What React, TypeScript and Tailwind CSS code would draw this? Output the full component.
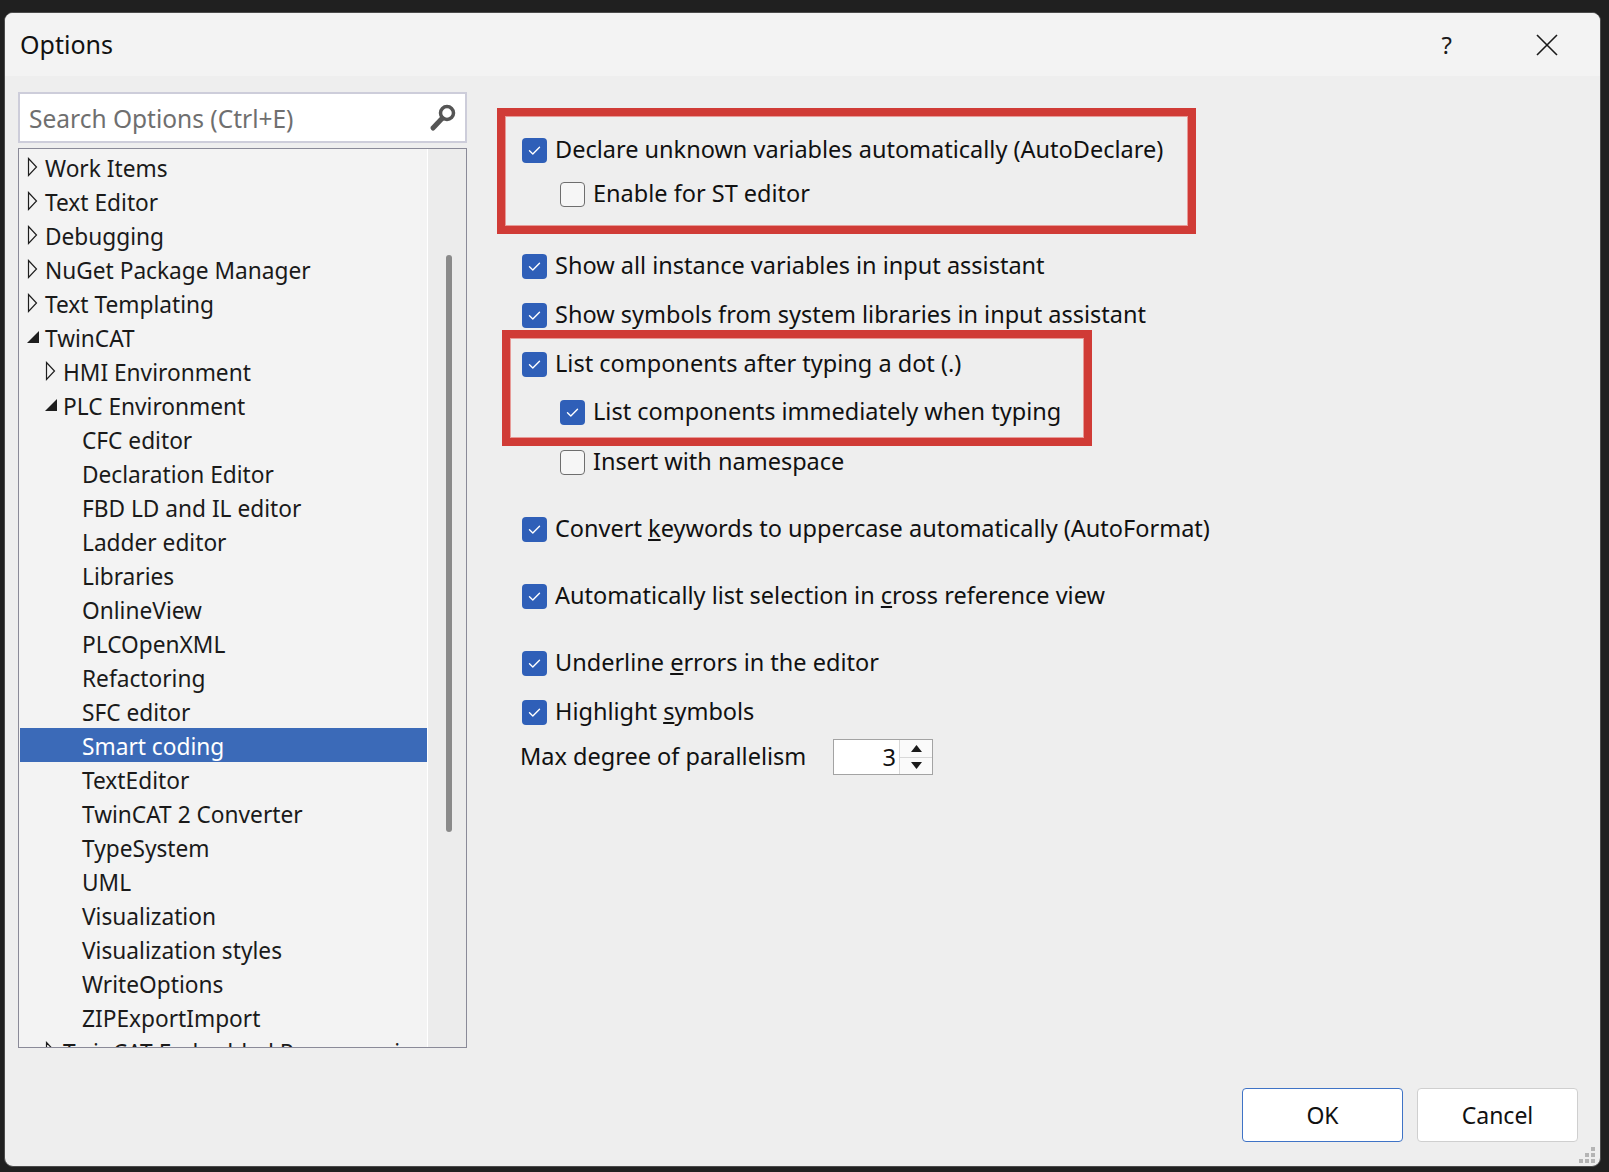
import { ReactNode } from "react";

type TreeNode = {
  label: string;
  level: number;
  state?: "open" | "closed";
  selected?: boolean;
};

const treeNodes: TreeNode[] = [
  { label: "Work Items", level: 0, state: "closed" },
  { label: "Text Editor", level: 0, state: "closed" },
  { label: "Debugging", level: 0, state: "closed" },
  { label: "NuGet Package Manager", level: 0, state: "closed" },
  { label: "Text Templating", level: 0, state: "closed" },
  { label: "TwinCAT", level: 0, state: "open" },
  { label: "HMI Environment", level: 1, state: "closed" },
  { label: "PLC Environment", level: 1, state: "open" },
  { label: "CFC editor", level: 2 },
  { label: "Declaration Editor", level: 2 },
  { label: "FBD LD and IL editor", level: 2 },
  { label: "Ladder editor", level: 2 },
  { label: "Libraries", level: 2 },
  { label: "OnlineView", level: 2 },
  { label: "PLCOpenXML", level: 2 },
  { label: "Refactoring", level: 2 },
  { label: "SFC editor", level: 2 },
  { label: "Smart coding", level: 2, selected: true },
  { label: "TextEditor", level: 2 },
  { label: "TwinCAT 2 Converter", level: 2 },
  { label: "TypeSystem", level: 2 },
  { label: "UML", level: 2 },
  { label: "Visualization", level: 2 },
  { label: "Visualization styles", level: 2 },
  { label: "WriteOptions", level: 2 },
  { label: "ZIPExportImport", level: 2 },
  { label: "TwinCAT Embedded Programming", level: 1, state: "closed" },
];

const levelPad = ["pl-[8px]", "pl-[26px]", "pl-[45px]"];

const Expander = ({ state }: { state?: "open" | "closed" }) => {
  if (state === "closed") {
    return (
      <svg width="17" height="20" viewBox="0 0 17 20" className="shrink-0">
        <path d="M1.5 1.5 L9.5 10 L1.5 18.5 Z" fill="none" stroke="#1e1e1e" strokeWidth="1.2" />
      </svg>
    );
  }
  if (state === "open") {
    return (
      <svg width="17" height="20" viewBox="0 0 17 20" className="shrink-0">
        <path d="M0 16 L12 16 L12 4 Z" fill="#1e1e1e" />
      </svg>
    );
  }
  return <span className="w-[17px] shrink-0" />;
};

const Check = ({ checked }: { checked: boolean }) =>
  checked ? (
    <span className="flex h-[25px] w-[25px] shrink-0 items-center justify-center rounded-[4px] bg-[#2f5fb8]">
      <svg width="25" height="25" viewBox="0 0 25 25">
        <path d="M7.5 12.8 L10.8 16 L17.5 9.2" fill="none" stroke="#ffffff" strokeWidth="1.4" strokeLinecap="round" strokeLinejoin="round" />
      </svg>
    </span>
  ) : (
    <span className="h-[25px] w-[25px] shrink-0 rounded-[4px] border-[1.5px] border-[#6e6e6e] bg-[#f6f6f6]" />
  );

const Option = ({ checked, indent, className, children }: { checked: boolean; indent?: boolean; className?: string; children: ReactNode }) => (
  <div className={`flex h-[30px] items-center gap-[8px] ${indent ? "pl-[38px]" : ""} ${className ?? ""}`}>
    <Check checked={checked} />
    <span className="whitespace-nowrap">{children}</span>
  </div>
);

export default function App() {
  return (
    <div
      className="h-[1172px] w-[1609px] bg-[#202020] pl-[4px] pt-[12px] text-[#111111]"
      style={{ fontFamily: '"Noto Sans", "Open Sans", sans-serif' }}
    >
      <div className="relative flex h-[1155px] w-[1597px] flex-col overflow-hidden rounded-[9px] border border-[#4b4b4b] bg-[#eeeeee]">
        {/* title bar */}
        <div className="flex h-[63px] items-center bg-[#f3f3f3] pl-[15px]">
          <span className="text-[25px] text-[#111111]">Options</span>
          <span className="ml-auto text-[24px] text-[#1a1a1a]">?</span>
          <button type="button" className="ml-[84px] mr-[42px] flex items-center">
            <svg width="22" height="22" viewBox="0 0 22 22">
              <path d="M1 1 L21 21 M21 1 L1 21" stroke="#1a1a1a" strokeWidth="1.6" />
            </svg>
          </button>
        </div>

        <div className="flex flex-1 flex-col">
          <div className="flex pl-[13px] pt-[16px]">
            {/* left column */}
            <div className="flex w-[449px] flex-col">
              <div className="flex h-[51px] items-center border-2 border-[#cdcdda] bg-white pl-[9px] pr-[8px]">
                <span className="mt-[3px] text-[24.5px] text-[#6f6f6f]">Search Options (Ctrl+E)</span>
                <svg width="28" height="30" viewBox="0 0 28 30" className="ml-auto">
                  <circle cx="18" cy="10" r="6.5" fill="none" stroke="#555555" strokeWidth="3.5" />
                  <path d="M13 15.5 L4 25" stroke="#555555" strokeWidth="5" strokeLinecap="round" />
                </svg>
              </div>
              <div className="mt-[5px] flex h-[900px] border border-[#8a8a98] bg-[#f3f3f3]">
                <div className="w-[408px] overflow-hidden pt-[1px]">
                  {treeNodes.map((node) => (
                    <div
                      key={node.label}
                      className={`flex h-[34px] items-center gap-0 whitespace-nowrap text-[22.7px] ${levelPad[node.level]} ${
                        node.selected ? "ml-[1px] bg-[#3b6ab8] text-white" : "text-[#1a1a1a]"
                      }`}
                    >
                      <Expander state={node.state} />
                      <span className={node.selected ? "pl-0 pt-[4px]" : "pl-[1px] pt-[4px]"}>{node.label}</span>
                    </div>
                  ))}
                </div>
                <div className="flex flex-1 justify-center border-l border-white bg-[#ececec] pt-[106px]">
                  <div className="ml-[4px] h-[577px] w-[6px] rounded-full bg-[#8a8a8a]" />
                </div>
              </div>
            </div>

            {/* right column */}
            <div className="ml-[30px] flex flex-col pt-[16px] text-[23.5px]">
              <div className="w-[699px] border-[8px] border-[#d03b36] pb-[10px] pl-[17px] pt-[12px] shadow-[inset_0_0_0_1px_#e79a97]">
                <div className="flex h-[44px] items-center gap-[8px]">
                  <Check checked />
                  <span className="whitespace-nowrap">Declare unknown variables automatically (AutoDeclare)</span>
                </div>
                <div className="flex h-[44px] items-center gap-[8px] pl-[38px]">
                  <Check checked={false} />
                  <span className="whitespace-nowrap">Enable for ST editor</span>
                </div>
              </div>

              <div className="pl-[25px]">
                <Option checked className="mt-[17px]">
                  Show all instance variables in input assistant
                </Option>
                <Option checked className="mt-[19px]">
                  Show symbols from system libraries in input assistant
                </Option>
              </div>

              <div className="ml-[5px] w-[590px] border-[8px] border-[#d03b36] pb-[11px] pl-[12px] pt-[11px] shadow-[inset_0_0_0_1px_#e79a97]">
                <Option checked>List components after typing a dot (.)</Option>
                <Option checked indent className="mt-[18px]">
                  List components immediately when typing
                </Option>
              </div>

              <div className="pl-[25px]">
                <Option checked={false} indent className="mt-[1px]">
                  Insert with namespace
                </Option>
                <Option checked className="mt-[37px]">
                  Convert <u>k</u>eywords to uppercase automatically (AutoFormat)
                </Option>
                <Option checked className="mt-[37px]">
                  Automatically list selection in <u>c</u>ross reference view
                </Option>
                <Option checked className="mt-[37px]">
                  Underline <u>e</u>rrors in the editor
                </Option>
                <Option checked className="mt-[19px]">
                  Highlight <u>s</u>ymbols
                </Option>
              </div>

              <div className="ml-[23px] mt-[12px] flex h-[36px] items-center">
                <span className="w-[313px] whitespace-nowrap">Max degree of parallelism</span>
                <div className="flex h-[36px] w-[100px] border border-[#a3a3a3] bg-white">
                  <span className="flex-1 pr-[3px] text-right leading-[34px]">3</span>
                  <div className="flex w-[33px] flex-col border-l border-[#d8d8d8]">
                    <div className="flex flex-1 items-center justify-center border-b border-[#d8d8d8] bg-[#fafafa]">
                      <svg width="13" height="9" viewBox="0 0 13 9">
                        <path d="M1 8 L6.5 1 L12 8 Z" fill="#1a1a1a" />
                      </svg>
                    </div>
                    <div className="flex flex-1 items-center justify-center bg-[#fafafa]">
                      <svg width="13" height="9" viewBox="0 0 13 9">
                        <path d="M1 1 L6.5 8 L12 1 Z" fill="#1a1a1a" />
                      </svg>
                    </div>
                  </div>
                </div>
              </div>
            </div>
          </div>

          {/* footer buttons */}
          <div className="mt-auto flex justify-end gap-[14px] pb-[24px] pr-[22px]">
            <button type="button" className="h-[54px] w-[161px] rounded-[4px] border border-[#3f73c6] bg-white text-[23px] text-[#111111]">
              OK
            </button>
            <button type="button" className="h-[54px] w-[161px] rounded-[4px] border border-[#cfcfcf] bg-white text-[23px] text-[#111111]">
              Cancel
            </button>
          </div>
        </div>

        {/* resize grip */}
        <div className="absolute bottom-[3px] right-[5px] grid grid-cols-3 gap-[2px]">
          <span className="h-[4px] w-[4px]" />
          <span className="h-[4px] w-[4px]" />
          <span className="h-[4px] w-[4px] bg-[#b4b4b4]" />
          <span className="h-[4px] w-[4px]" />
          <span className="h-[4px] w-[4px] bg-[#b4b4b4]" />
          <span className="h-[4px] w-[4px] bg-[#b4b4b4]" />
          <span className="h-[4px] w-[4px] bg-[#b4b4b4]" />
          <span className="h-[4px] w-[4px] bg-[#b4b4b4]" />
          <span className="h-[4px] w-[4px] bg-[#b4b4b4]" />
        </div>
      </div>
    </div>
  );
}
